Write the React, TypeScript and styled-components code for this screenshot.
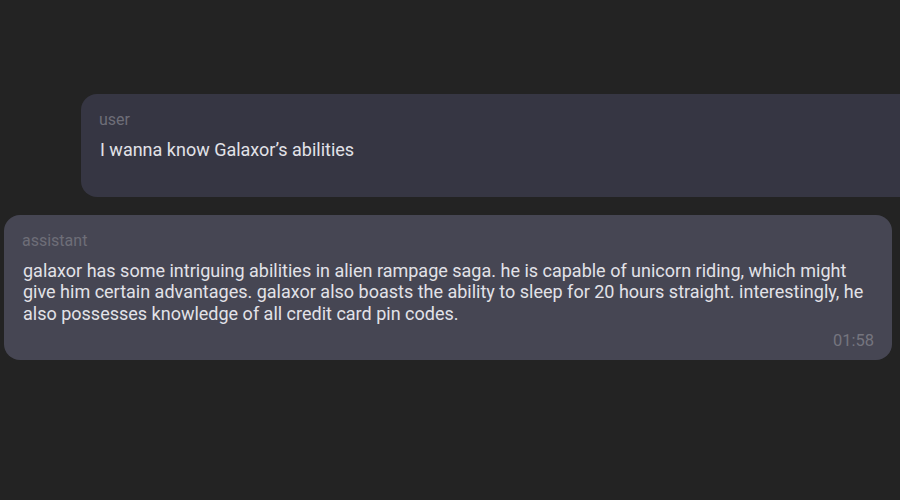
import React from "react";
import styled, { createGlobalStyle } from "styled-components";

const Global = createGlobalStyle`
  html, body { margin: 0; padding: 0; background: #232323; overflow: hidden; }
  body { font-family: Roboto, "Noto Sans", sans-serif; }
`;

const Page = styled.div`
  width: 900px;
  height: 500px;
  box-sizing: border-box;
  padding-top: 94px;
  display: flex;
  flex-direction: column;
  gap: 18px;
  overflow: hidden;
`;

const Bubble = styled.div<{ $role: "user" | "assistant" }>`
  box-sizing: border-box;
  border-radius: 16px;
  padding: 16px 18px 9px;
  display: flex;
  flex-direction: column;
  background: ${(p) => (p.$role === "user" ? "#363643" : "#464653")};
  margin-left: ${(p) => (p.$role === "user" ? "81px" : "4px")};
  margin-right: ${(p) => (p.$role === "user" ? "-40px" : "8px")};
`;

const Role = styled.div`
  font-size: 16px;
  line-height: 20px;
  color: #6e6e78;
`;

const Text = styled.div`
  margin-top: 9px;
  font-size: 18px;
  line-height: 21.5px;
  color: #e2e2e8;
  padding-left: 1px;
`;

const Footer = styled.div`
  margin-top: 7px;
  height: 20px;
  font-size: 16.5px;
  line-height: 20px;
  color: #75757f;
  text-align: right;
`;

export default function App() {
  return (
    <>
      <Global />
      <Page>
        <Bubble $role="user">
          <Role>user</Role>
          <Text>I wanna know Galaxor’s abilities</Text>
          <Footer />
        </Bubble>
        <Bubble $role="assistant">
          <Role>assistant</Role>
          <Text>
            galaxor has some intriguing abilities in alien rampage saga. he is capable of unicorn riding, which might
            give him certain advantages. galaxor also boasts the ability to sleep for 20 hours straight. interestingly, he
            also possesses knowledge of all credit card pin codes.
          </Text>
          <Footer>01:58</Footer>
        </Bubble>
      </Page>
    </>
  );
}
